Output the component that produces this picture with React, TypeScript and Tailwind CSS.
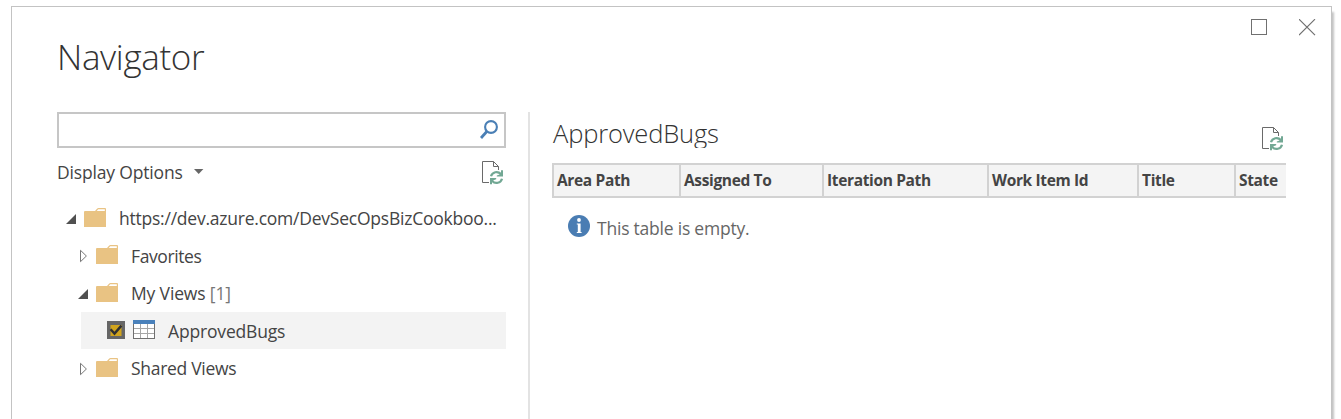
import React from "react";

function Folder() {
  return (
    <svg width="22" height="19" viewBox="0 0 22 19" className="block shrink-0">
      <path d="M0 4Q0 3 1 3H11L13 0.8Q13.6 0 14.5 0H21Q22 0 22 1V19H0Z" fill="#e9c383" />
      <path d="M12.7 3L14.2 1.3H20.8V3Z" fill="#fff" />
    </svg>
  );
}

function Arrow({ open }: { open: boolean }) {
  return open ? (
    <svg width="10" height="10" viewBox="0 0 10 10" className="block shrink-0">
      <path d="M10 0V10H0Z" fill="#505050" />
    </svg>
  ) : (
    <svg width="10" height="14" viewBox="0 0 10 14" className="block shrink-0">
      <path d="M2.5 1.3V12.7L8.4 7Z" fill="#fff" stroke="#777" />
    </svg>
  );
}

function RefreshDoc() {
  return (
    <svg width="22" height="24" viewBox="0 0 22 24" className="block shrink-0">
      <path d="M7 21.5H0.5V0.5H11.5L16.5 5.5V9" fill="none" stroke="#6a6a6a" />
      <path d="M11.5 0.5V5.5H16.5" fill="none" stroke="#6a6a6a" />
      <g fill="none" stroke="#72a894" strokeWidth="2.2">
        <path d="M9 15.3A5.7 5.7 0 0 1 18.8 13" />
        <path d="M20 17.7A5.7 5.7 0 0 1 10.2 20" />
      </g>
      <path d="M21 9.3V15.6H14.8V14.4L17.5 13.6L19 11.5V9.3Z" fill="#72a894" />
      <path d="M8 23.3V17H14.2V18.3L11.5 19.2L10 21.3V23.3Z" fill="#72a894" />
    </svg>
  );
}

function TableIcon() {
  return (
    <svg width="22" height="19" viewBox="0 0 22 19" className="block shrink-0">
      <rect x="0.5" y="0.5" width="21" height="18" fill="#fff" stroke="#707070" />
      <rect width="22" height="4" fill="#4a81bb" />
      <path d="M1 8.5H21M1 13.5H21M7.5 4V18M14.5 4V18" stroke="#a6a6a6" />
    </svg>
  );
}

function CheckedBox() {
  return (
    <svg width="18" height="18" viewBox="0 0 18 18" className="block shrink-0">
      <rect width="18" height="18" fill="#666" />
      <rect x="3.5" y="4" width="11" height="11" fill="#d1a41c" />
      <path d="M3.6 8.2L7.5 12.6L14.4 4.6" fill="none" stroke="#303030" strokeWidth="2.4" />
    </svg>
  );
}

const columns = [
  { name: "Area Path", cls: "w-[127px]" },
  { name: "Assigned To", cls: "w-[143px]" },
  { name: "Iteration Path", cls: "w-[165px]" },
  { name: "Work Item Id", cls: "w-[150px]" },
  { name: "Title", cls: "w-[97px]" },
  { name: "State", cls: "w-[52px]" },
];

export default function App() {
  return (
    <div className="h-[419px] w-[1341px] overflow-hidden bg-white pl-[11px] pt-[6px] font-['Open_Sans',sans-serif] text-[#444]">
      <div className="flex h-[440px] w-[1321px] flex-col border border-[#c3c3c3] bg-white shadow-[3px_5px_2px_-1px_#c4c4c4]">
        <header className="flex h-[105px] shrink-0 justify-between pl-[45px] pr-[15px]">
          <h1 className="pt-[26px] text-[35px] font-light leading-[48px] tracking-[-0.35px] text-[#333]">
            Navigator
          </h1>
          <div className="flex gap-8 pt-3">
            <svg width="16" height="16" viewBox="0 0 16 16">
              <rect x="0.5" y="0.5" width="15" height="15" fill="none" stroke="#707070" />
            </svg>
            <svg width="17" height="17" viewBox="0 0 17 17">
              <path d="M0 0.2L16 16.2M16 0.2L0 16.2" stroke="#707070" strokeWidth="1.2" />
            </svg>
          </div>
        </header>
        <div className="flex flex-1 pl-[45px]">
          <section className="flex w-[449px] shrink-0 flex-col">
            <div className="flex h-[36px] justify-end border-2 border-[#c6c6c6] pr-[6px] pt-[6px]">
              <svg width="18" height="19" viewBox="0 0 18 19">
                <circle cx="11" cy="7" r="5.9" fill="none" stroke="#4a7fb5" strokeWidth="2.1" />
                <path d="M6.8 11.5L1 18" stroke="#4a7fb5" strokeWidth="2.8" />
              </svg>
            </div>
            <div className="flex h-[52px] justify-between pr-[2px] pt-[13px]">
              <div className="flex h-6 text-[17.5px] leading-6">
                <span className="-mt-px w-[137px] whitespace-nowrap tracking-[-0.17px]">Display Options</span>
                <svg width="10" height="5" viewBox="0 0 10 5" className="mt-2">
                  <path d="M0 0H9.4L4.7 5Z" fill="#666" />
                </svg>
              </div>
              <RefreshDoc />
            </div>
            <div className="flex flex-col text-[17.5px] tracking-[-0.25px]">
              <div className="flex h-[37px] pl-[9px] pt-2">
                <div className="w-[18px] pt-[6px]"><Arrow open /></div>
                <Folder />
                <span className="-mt-1 whitespace-nowrap pl-[13px] leading-[28px] tracking-[-0.23px]">
                  https://dev.azure.com/DevSecOpsBizCookboo...
                </span>
              </div>
              <div className="flex h-[38px] pl-[21px] pt-2">
                <div className="w-[18px] pt-1"><Arrow open={false} /></div>
                <Folder />
                <span className="-mt-[3px] whitespace-nowrap pl-[13px] leading-[28px] tracking-[-0.4px]">Favorites</span>
              </div>
              <div className="flex h-[37px] pl-[21px] pt-2">
                <div className="w-[18px] pt-[6px]"><Arrow open /></div>
                <Folder />
                <span className="-mt-1 whitespace-nowrap pl-[13px] leading-[28px] tracking-[-0.15px]">
                  My Views <span className="text-[#767676]">[1]</span>
                </span>
              </div>
              <div className="ml-6 flex h-[37px] bg-[#f3f3f3] pl-[26px] pt-2">
                <div className="w-[26px] pt-px"><CheckedBox /></div>
                <TableIcon />
                <span className="-mt-[3px] whitespace-nowrap pl-[13px] leading-[28px] tracking-[-0.17px]">ApprovedBugs</span>
              </div>
              <div className="mt-px flex h-[37px] pl-[21px] pt-2">
                <div className="w-[18px] pt-1"><Arrow open={false} /></div>
                <Folder />
                <span className="-mt-1 whitespace-nowrap pl-[13px] leading-[28px] tracking-[-0.3px]">Shared Views</span>
              </div>
            </div>
          </section>
          <div className="ml-[22px] w-[2px] shrink-0 bg-[#e3e3e3]" />
          <section className="ml-[22px] flex w-[734px] shrink-0 flex-col">
            <div className="flex h-[51px] justify-between pr-[2px]">
              <h2 className="h-9 overflow-hidden pl-px pt-[4px] text-[25.5px] font-light leading-[34px] tracking-[-0.15px] text-[#333]">
                ApprovedBugs
              </h2>
              <div className="pt-[15px]"><RefreshDoc /></div>
            </div>
            <div className="flex h-[35px] border-y-2 border-[#d2d2d2] bg-[#f4f4f4] text-[15.5px] font-bold leading-[30px] tracking-[-0.35px]">
              {columns.map((c) => (
                <div key={c.name} className={"shrink-0 border-l-2 border-[#d2d2d2] pl-[3px] whitespace-nowrap " + c.cls}>
                  {c.name}
                </div>
              ))}
            </div>
            <div className="flex pl-4 pt-[17px]">
              <svg width="22" height="22" viewBox="0 0 22 22">
                <circle cx="11" cy="11" r="11" fill="#4a7db3" />
                <circle cx="11" cy="5" r="1.9" fill="#fff" />
                <path d="M8.8 8.5H12.6V17H13.6V18H8.8V17H9.8V9.5H8.8Z" fill="#fff" />
              </svg>
              <span className="pl-[7px] pt-px text-[17.5px] leading-6 tracking-[-0.22px] text-[#666]">This table is empty.</span>
            </div>
          </section>
        </div>
      </div>
    </div>
  );
}
